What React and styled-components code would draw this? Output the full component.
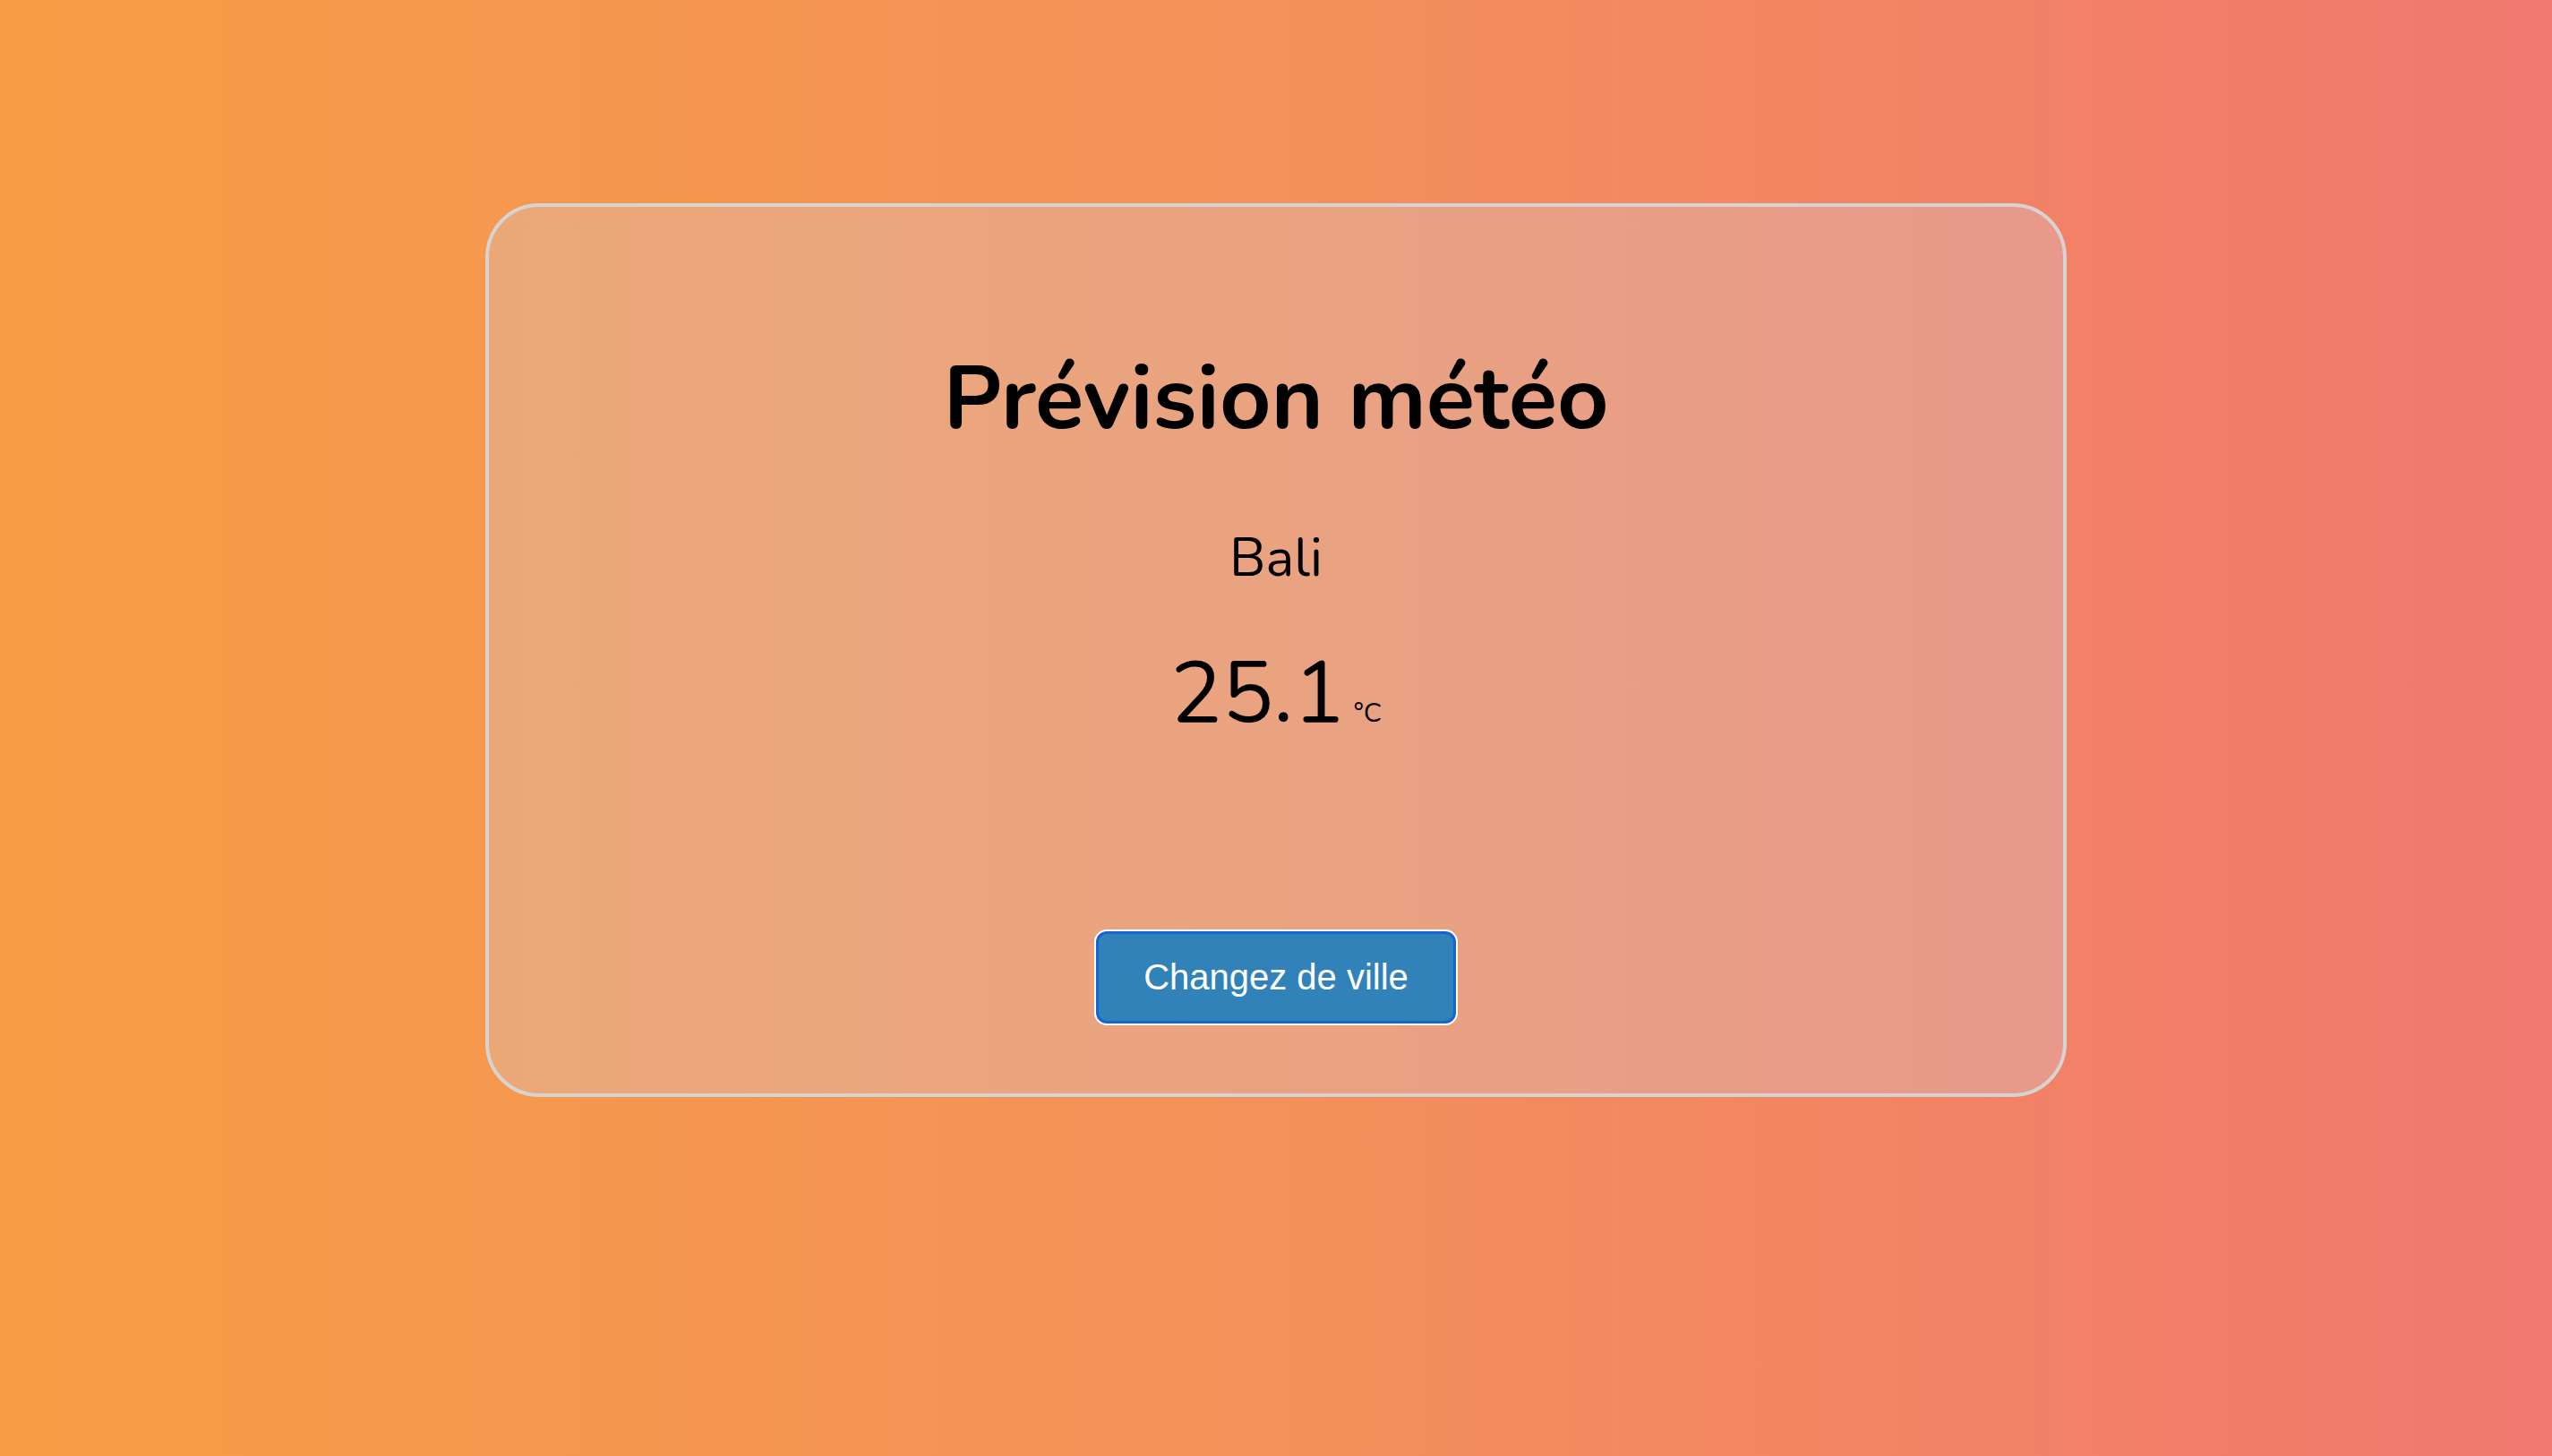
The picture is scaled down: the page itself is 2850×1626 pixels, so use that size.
import React from "react";
import styled, { createGlobalStyle } from "styled-components";

const GlobalStyle = createGlobalStyle`
  html, body {
    margin: 0;
    padding: 0;
  }
  body {
    font-family: "Nunito", "Lato", "Noto Sans", sans-serif;
  }
`;

const Page = styled.div`
  min-height: 100vh;
  background: linear-gradient(to right, #f79d45, #f4905a 50%, #f0786f);
  display: flex;
  flex-direction: column;
  align-items: center;
  padding-top: 227px;
  box-sizing: border-box;
`;

const Card = styled.div`
  width: 1766px;
  box-sizing: border-box;
  border: 4px solid #d6d4d2;
  border-radius: 60px;
  background: linear-gradient(to right, #eba877, #e9a381 50%, #e8998b);
  display: flex;
  flex-direction: column;
  align-items: center;
  padding: 164px 0 76px;
  color: #000;
`;

const Title = styled.h1`
  margin: 0;
  font-size: 100px;
  line-height: 1;
  font-weight: 700;
`;

const City = styled.div`
  margin-top: 98px;
  font-size: 60px;
  line-height: 1;
  font-weight: 400;
`;

const TempRow = styled.div`
  margin-top: 74px;
  display: flex;
  align-items: baseline;
  line-height: 1;
`;

const Temp = styled.span`
  font-size: 96px;
`;

const Unit = styled.span`
  font-size: 30px;
  margin-left: 10px;
`;

const Button = styled.button`
  margin-top: 215px;
  width: 406px;
  height: 107px;
  box-sizing: border-box;
  border: 2px solid #fff;
  border-radius: 14px;
  box-shadow: inset 0 0 0 3px #1565d2;
  background: #3282ba;
  color: #fff;
  font-family: "Liberation Sans", Arial, sans-serif;
  font-size: 40px;
  cursor: pointer;
`;

const App = () => {
  return (
    <>
      <GlobalStyle />
      <Page>
        <Card>
          <Title>Prévision météo</Title>
          <City>Bali</City>
          <TempRow>
            <Temp>25.1</Temp>
            <Unit>°C</Unit>
          </TempRow>
          <Button>Changez de ville</Button>
        </Card>
      </Page>
    </>
  );
};

export default App;
